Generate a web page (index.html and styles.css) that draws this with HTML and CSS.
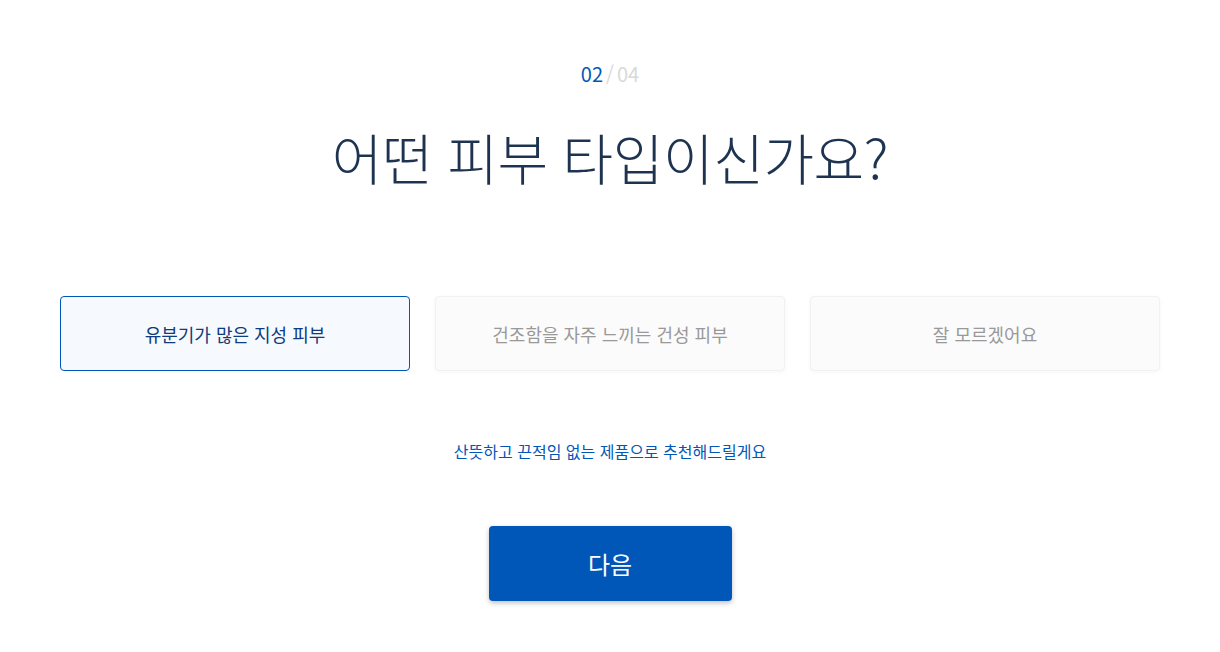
FILE: index.html
```html
<!DOCTYPE html>
<html lang="ko">
<head>
<meta charset="utf-8">
<link rel="stylesheet" href="styles.css">
</head>
<body>
<main class="page">
  <div class="step"><span class="step-cur">02</span><span class="step-sep">/</span><span class="step-total">04</span></div>
  <h1 class="title">어떤 피부 타입이신가요?</h1>
  <div class="options">
    <button class="option option-active">유분기가 많은 지성 피부</button>
    <button class="option">건조함을 자주 느끼는 건성 피부</button>
    <button class="option">잘 모르겠어요</button>
  </div>
  <p class="hint">산뜻하고 끈적임 없는 제품으로 추천해드릴게요</p>
  <button class="next">다음</button>
</main>
</body>
</html>
```
FILE: styles.css
```css
* { box-sizing: border-box; }
html, body { margin: 0; padding: 0; background: #fff; }
body {
  font-family: "Noto Sans CJK KR", "Noto Sans", sans-serif;
  width: 1220px;
  height: 652px;
  overflow: hidden;
}
.page {
  display: flex;
  flex-direction: column;
  align-items: center;
  padding-top: 60px;
}
.step {
  font-size: 20px;
  line-height: 28px;
  height: 28px;
  font-weight: 400;
}
.step-cur { color: #0057b8; }
.step-sep { color: #d9d9d9; margin: 0 3px; }
.step-total { color: #d9d9d9; }
.title {
  margin: 30px 0 0;
  font-size: 55px;
  line-height: 76px;
  font-weight: 300;
  color: #1e3350;
  letter-spacing: -0.4px;
}
.options {
  display: flex;
  gap: 25px;
  margin-top: 102px;
}
.option {
  width: 350px;
  height: 75px;
  border-radius: 4px;
  border: 1px solid #f1f1f1;
  background: #fbfbfb;
  box-shadow: 0 1px 4px rgba(0,0,0,0.04);
  font-family: inherit;
  font-size: 18px;
  color: #999;
  letter-spacing: 0;
  padding: 0;
}
.option-active {
  border-color: #0057b8;
  background: #f6f9fd;
  color: #0e3c7c;
  box-shadow: none;
}
.hint {
  margin: 68px 0 0;
  font-size: 16px;
  line-height: 24px;
  color: #0057b8;
  letter-spacing: 0;
}
.next {
  margin-top: 63px;
  width: 243px;
  height: 75px;
  border: none;
  border-radius: 4px;
  background: #0057b8;
  color: #fff;
  font-family: inherit;
  font-size: 24px;
  box-shadow: 0 2px 5px rgba(0,0,0,0.25);
}
```
